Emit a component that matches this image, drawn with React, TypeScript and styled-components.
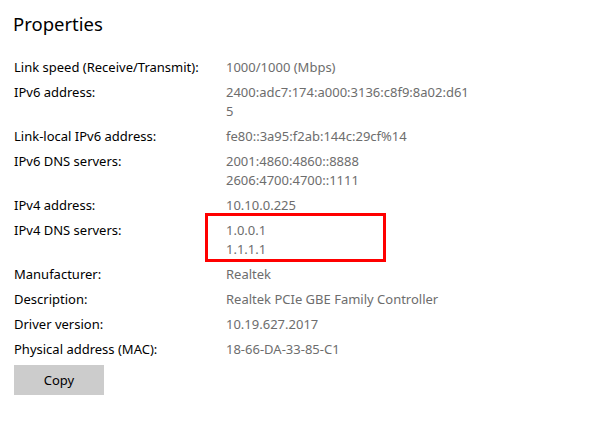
import React from 'react'
import styled, { createGlobalStyle } from 'styled-components'

const GlobalStyle = createGlobalStyle`
  body {
    margin: 0;
    background: #ffffff;
    font-family: 'Noto Sans', 'Open Sans', sans-serif;
  }
`

const Page = styled.div`
  padding: 10px 14px 20px 14px;
  width: 596px;
  box-sizing: border-box;
`

const Title = styled.h1`
  margin: 0 0 20px -1px;
  font-size: 18.5px;
  font-weight: 400;
  line-height: 28px;
  color: #000;
`

const PropGrid = styled.dl`
  display: grid;
  grid-template-columns: 212px 1fr;
  row-gap: 6px;
  margin: 0;
`

const Label = styled.dt`
  margin: 0;
  font-size: 13px;
  line-height: 19px;
  color: #000;
`

const Value = styled.dd`
  margin: 0;
  font-size: 13px;
  line-height: 19px;
  color: #6d6d6d;
  position: relative;
`

const Line = styled.div``

// red marker box drawn over the IPv4 DNS values
const Highlight = styled.span`
  position: absolute;
  left: -21px;
  top: -8px;
  width: 181px;
  height: 49px;
  box-sizing: border-box;
  border: 3px solid #ff0000;
  pointer-events: none;
`

const CopyButton = styled.button`
  margin-top: 6px;
  width: 90px;
  height: 30px;
  border: none;
  background: #cccccc;
  color: #000;
  font-family: inherit;
  font-size: 13px;
  padding: 0;
`

interface PropRow {
  label: string
  lines: string[]
  highlight?: boolean
}

const rows: PropRow[] = [
  { label: 'Link speed (Receive/Transmit):', lines: ['1000/1000 (Mbps)'] },
  { label: 'IPv6 address:', lines: ['2400:adc7:174:a000:3136:c8f9:8a02:d61', '5'] },
  { label: 'Link-local IPv6 address:', lines: ['fe80::3a95:f2ab:144c:29cf%14'] },
  { label: 'IPv6 DNS servers:', lines: ['2001:4860:4860::8888', '2606:4700:4700::1111'] },
  { label: 'IPv4 address:', lines: ['10.10.0.225'] },
  { label: 'IPv4 DNS servers:', lines: ['1.0.0.1', '1.1.1.1'], highlight: true },
  { label: 'Manufacturer:', lines: ['Realtek'] },
  { label: 'Description:', lines: ['Realtek PCIe GBE Family Controller'] },
  { label: 'Driver version:', lines: ['10.19.627.2017'] },
  { label: 'Physical address (MAC):', lines: ['18-66-DA-33-85-C1'] },
]

export default function App() {
  return (
    <Page>
      <GlobalStyle />
      <Title>Properties</Title>
      <PropGrid>
        {rows.map((row) => (
          <React.Fragment key={row.label}>
            <Label>{row.label}</Label>
            <Value>
              {row.lines.map((l) => (
                <Line key={l}>{l}</Line>
              ))}
              {row.highlight && <Highlight />}
            </Value>
          </React.Fragment>
        ))}
      </PropGrid>
      <CopyButton>Copy</CopyButton>
    </Page>
  )
}
